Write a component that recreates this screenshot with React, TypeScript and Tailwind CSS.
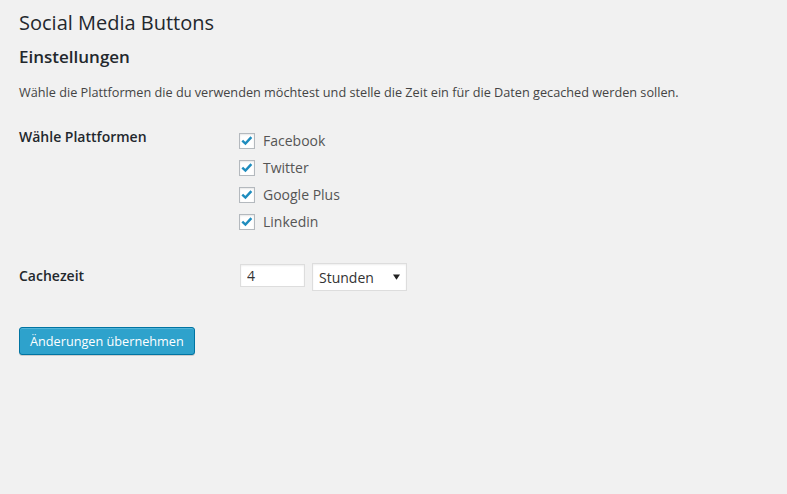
import React, { useState } from 'react';

const platforms = ['Facebook', 'Twitter', 'Google Plus', 'Linkedin'];

const CheckBox: React.FC<{ checked: boolean; onToggle: () => void }> = ({ checked, onToggle }) => (
  <button
    type="button"
    onClick={onToggle}
    className="w-4 h-4 flex items-center justify-center bg-white border border-[#b4b9be] shadow-[inset_0_1px_2px_rgba(0,0,0,0.1)] shrink-0"
  >
    {checked && (
      <svg viewBox="0 0 16 16" className="w-[14px] h-[14px]">
        <path d="M2.6 7.6 L6.2 11 L13 3.6" fill="none" stroke="#1e8cbe" strokeWidth="2.8" strokeLinecap="butt" strokeLinejoin="miter" />
      </svg>
    )}
  </button>
);

export default function App() {
  const [checked, setChecked] = useState([true, true, true, true]);
  const [hours, setHours] = useState('4');

  return (
    <div className="min-h-screen bg-[#f1f1f1] pl-[19px] pt-[8px] text-[#444] font-['Open_Sans',sans-serif]">
      <h1 className="text-[20px] leading-[29px] font-normal text-[#23282d]">Social Media Buttons</h1>
      <h2 className="mt-[8px] text-[17px] leading-[24px] font-semibold text-[#23282d]">Einstellungen</h2>
      <p className="mt-[13px] text-[12.7px] leading-[20px]">
        Wähle die Plattformen die du verwenden möchtest und stelle die Zeit ein für die Daten gecached werden sollen.
      </p>

      <div className="mt-[25px] flex">
        <div className="w-[220px] text-[14px] leading-[20px] font-semibold text-[#23282d]">Wähle Plattformen</div>
        <div className="flex flex-col">
          {platforms.map((name, i) => (
            <label key={name} className="h-[27px] flex items-center gap-2 text-[14px] text-[#555] cursor-pointer">
              <CheckBox
                checked={checked[i]}
                onToggle={() => setChecked((prev) => prev.map((c, j) => (j === i ? !c : c)))}
              />
              <span>{name}</span>
            </label>
          ))}
        </div>
      </div>

      <div className="mt-[28px] flex items-start">
        <div className="w-[221px] mt-[3px] text-[14px] leading-[20px] font-semibold text-[#23282d]">Cachezeit</div>
        <input
          value={hours}
          onChange={(e) => setHours(e.target.value)}
          className="mt-[1px] w-[65px] h-[23px] px-[6px] bg-white border border-[#ddd] shadow-[inset_0_1px_2px_rgba(0,0,0,0.07)] text-[14px] text-[#333] outline-none"
        />
        <div className="ml-[7px] w-[95px] h-[28px] flex items-center justify-between pl-[6px] pr-[6px] bg-white border border-[#ddd] shadow-[inset_0_1px_2px_rgba(0,0,0,0.07)] text-[14px] text-[#333]">
          <span>Stunden</span>
          <svg viewBox="0 0 8 6" className="w-[7px] h-[6px]">
            <path d="M0 0 H8 L4 6 Z" fill="#222" />
          </svg>
        </div>
      </div>

      <button
        type="button"
        className="mt-[36px] h-[28px] px-[10px] bg-[#2ea2cc] border border-[#0074a2] rounded-[3px] text-white text-[12.7px] leading-[26px] shadow-[inset_0_1px_0_rgba(120,200,230,0.5),0_1px_0_rgba(0,0,0,0.15)]"
      >
        Änderungen übernehmen
      </button>
    </div>
  );
}
